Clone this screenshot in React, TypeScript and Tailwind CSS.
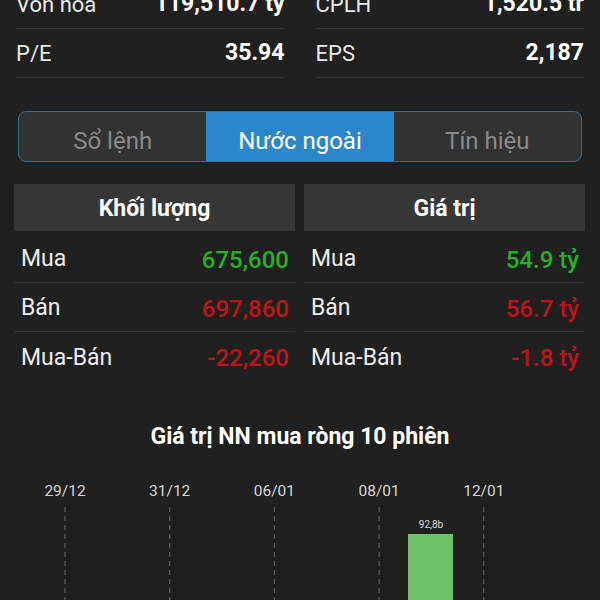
import React from "react";

const stats = [
    { left: ["Vốn hóa", "119,510.7 tỷ"], right: ["CPLH", "1,520.5 tr"] },
    { left: ["P/E", "35.94"], right: ["EPS", "2,187"] },
];

const tabs = ["Sổ lệnh", "Nước ngoài", "Tín hiệu"];

type Row = { label: string; value: string; color: string };

const volumeRows: Row[] = [
    { label: "Mua", value: "675,600", color: "text-[#26b026]" },
    { label: "Bán", value: "697,860", color: "text-[#c0121b]" },
    { label: "Mua-Bán", value: "-22,260", color: "text-[#c0121b]" },
];

const valueRows: Row[] = [
    { label: "Mua", value: "54.9 tỷ", color: "text-[#26b026]" },
    { label: "Bán", value: "56.7 tỷ", color: "text-[#c0121b]" },
    { label: "Mua-Bán", value: "-1.8 tỷ", color: "text-[#c0121b]" },
];

const dates = ["29/12", "31/12", "06/01", "08/01", "12/01"];

const StatCell: React.FC<{ label: string; value: string }> = ({ label, value }) => (
    <div className="h-[49px] flex items-center justify-between border-b border-[#333333]">
        <span className="text-[22px] text-[#e8e8e8]">{label}</span>
        <span className="text-[23px] font-bold text-white">{value}</span>
    </div>
);

const Table: React.FC<{ title: string; rows: Row[] }> = ({ title, rows }) => (
    <div className="flex flex-col">
        <div className="h-[47px] pt-[3px] bg-[#363636] flex items-center justify-center text-[23px] font-bold text-white">
            {title}
        </div>
        <div className="mt-[3px]">
            {rows.map((row, i) => (
                <div
                    key={row.label}
                    className={`h-[49px] pt-[3px] flex items-center justify-between pl-[7px] pr-[6px] ${
                        i < rows.length - 1 ? "border-b border-[#333333]" : ""
                    }`}
                >
                    <span className="text-[23px] text-[#ededed]">{row.label}</span>
                    <span className={`text-[24px] font-medium ${row.color}`}>{row.value}</span>
                </div>
            ))}
        </div>
    </div>
);

export default function App() {
    return (
        <div
            className="w-[600px] h-[600px] overflow-hidden bg-[#202020]"
            style={{ fontFamily: "Roboto, 'Noto Sans', sans-serif" }}
        >
            <div className="-mt-[20px]">
                {/* stats */}
                <div className="grid grid-cols-2 gap-x-[31px] pl-[16px] pr-[16px]">
                    {stats.map((s) => (
                        <React.Fragment key={s.left[0]}>
                            <StatCell label={s.left[0]} value={s.left[1]} />
                            <StatCell label={s.right[0]} value={s.right[1]} />
                        </React.Fragment>
                    ))}
                </div>

                {/* tabs */}
                <div className="mx-[18px] mt-[33px] h-[51px] grid grid-cols-3 rounded-[8px] border-[1.5px] border-[#3b6d8f] overflow-hidden bg-[#323232]">
                    {tabs.map((t, i) => (
                        <div
                            key={t}
                            className={`flex items-center justify-center pt-[8px] text-[24px] ${
                                i === 1 ? "bg-[#2b87c9] text-white" : "text-[#8a8a8a]"
                            }`}
                        >
                            {t}
                        </div>
                    ))}
                </div>

                {/* foreign trade tables */}
                <div className="mt-[22px] pl-[14px] pr-[15px] grid grid-cols-2 gap-x-[9px]">
                    <Table title="Khối lượng" rows={volumeRows} />
                    <Table title="Giá trị" rows={valueRows} />
                </div>

                {/* chart */}
                <div className="mt-[41px] text-center text-[23px] font-bold text-white leading-[30px]">
                    Giá trị NN mua ròng 10 phiên
                </div>
                <svg width="600" height="160" className="mt-[20px] block">
                    {dates.map((d, i) => {
                        const x = 65 + i * 104.7;
                        return (
                            <g key={d}>
                                <text
                                    x={x}
                                    y={24}
                                    textAnchor="middle"
                                    fontSize="15.5"
                                    fill="#d6d6d6"
                                    fontFamily="Roboto, sans-serif"
                                >
                                    {d}
                                </text>
                                <line
                                    x1={x}
                                    x2={x}
                                    y1={35}
                                    y2={160}
                                    stroke="#6a6a6a"
                                    strokeWidth="1"
                                    strokeDasharray="5 4"
                                />
                            </g>
                        );
                    })}
                    <text
                        x={431}
                        y={56}
                        textAnchor="middle"
                        fontSize="10"
                        fill="#dddddd"
                        fontFamily="Roboto, sans-serif"
                    >
                        92,8b
                    </text>
                    <rect x={408} y={62} width={45} height={100} fill="#6dbf69" />
                </svg>
            </div>
        </div>
    );
}
